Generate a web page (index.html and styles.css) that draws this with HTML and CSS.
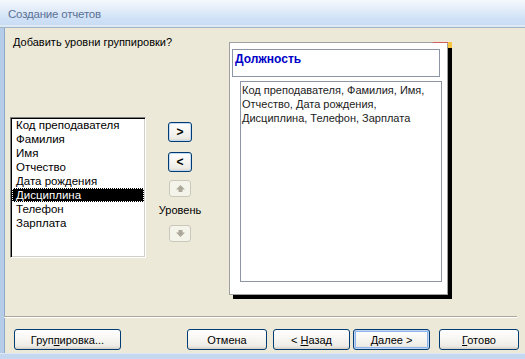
FILE: index.html
```html
<!DOCTYPE html>
<html lang="ru">
<head>
<meta charset="UTF-8" />
<title>Создание отчетов</title>
<link rel="stylesheet" href="styles.css">
</head>
<body>
<div id="wizard">
  <div class="titlebar">Создание отчетов</div>
  <div class="frame">
    <div class="top">
      <div class="left">
        <div class="prompt">Добавить уровни группировки?</div>
        <div class="picker">
          <div class="listbox">
            <div class="item">Код преподавателя</div>
            <div class="item">Фамилия</div>
            <div class="item">Имя</div>
            <div class="item">Отчество</div>
            <div class="item">Дата рождения</div>
            <div class="item selected">Дисциплина</div>
            <div class="item">Телефон</div>
            <div class="item">Зарплата</div>
          </div>
          <div class="controls">
            <button class="btn small">&gt;</button>
            <button class="btn small lt">&lt;</button>
            <button class="btn arrow up" disabled>
              <svg width="9" height="7" viewBox="0 0 9 7"><path d="M4.5 0 L9 4.5 L6.5 4.5 L6.5 7 L2.5 7 L2.5 4.5 L0 4.5 Z" fill="#aca899"/></svg>
            </button>
            <div class="level">Уровень</div>
            <button class="btn arrow" disabled>
              <svg width="9" height="7" viewBox="0 0 9 7"><path d="M4.5 7 L9 2.5 L6.5 2.5 L6.5 0 L2.5 0 L2.5 2.5 L0 2.5 Z" fill="#aca899"/></svg>
            </button>
          </div>
        </div>
      </div>
      <div class="preview">
        <div class="group-head">Должность</div>
        <div class="group-body">Код преподавателя, Фамилия, Имя, Отчество, Дата рождения, Дисциплина, Телефон, Зарплата</div>
      </div>
    </div>
    <div class="separator"></div>
    <div class="actions">
      <button class="btn wide">Груп<u>п</u>ировка...</button>
      <button class="btn cancel">Отмена</button>
      <button class="btn back">&lt; <u>Н</u>азад</button>
      <button class="btn next default"><u>Д</u>алее &gt;</button>
      <button class="btn done"><u>Г</u>отово</button>
    </div>
  </div>
  <div class="bottom-edge"></div>
</div>
</body>
</html>
```

FILE: styles.css
```css
* {
  box-sizing: border-box;
}
body {
  margin: 0;
  width: 525px;
  height: 359px;
  overflow: hidden;
  font-family: "Liberation Sans", Arial, sans-serif;
  font-size: 11px;
  color: #000;
  background: #ece9d8;
}
#wizard {
  display: flex;
  flex-direction: column;
  height: 359px;
}
.titlebar {
  height: 28px;
  padding: 8px 0 0 8px;
  font-size: 11.5px;
  letter-spacing: -0.2px;
  color: #5b7196;
  background: linear-gradient(#f5f8fd 0, #e8f0fa 25%, #cfe1f6 70%, #c6dbf4 100%);
  border-bottom: 1px solid #9fb3c9;
  box-shadow: inset 0 -2px 0 #dfe9f4;
}
.frame {
  flex: 1;
  display: flex;
  flex-direction: column;
  border-left: 4px solid #b6cdea;
  box-shadow: inset 1px 0 0 #8ea9cc;
}
.top {
  display: flex;
  height: 287px;
}
.left {
  width: 225px;
  padding: 8px 0 0 6px;
}
.prompt {
  margin-left: 3px;
  line-height: 13px;
}
.picker {
  display: flex;
  margin-top: 68px;
}
.listbox {
  width: 136px;
  height: 141px;
  background: #fff;
  border-top: 1px solid #808080;
  border-left: 1px solid #808080;
  border-right: 1px solid #fff;
  border-bottom: 1px solid #fff;
  box-shadow: inset 1px 1px 0 #000, inset -1px -1px 0 #d4d0c8;
  padding: 0 1px 1px;
}
.item {
  height: 14px;
  line-height: 14px;
  padding-left: 4px;
  font-size: 11.5px;
  white-space: nowrap;
}
.item.selected {
  background: #000;
  color: #fff;
  outline: 1px dotted #fff;
  outline-offset: -1px;
}
.controls {
  width: 56px;
  margin-left: 6px;
  display: flex;
  flex-direction: column;
  align-items: center;
  padding-top: 5px;
}
.btn {
  font-family: "Liberation Sans", Arial, sans-serif;
  font-size: 11px;
  color: #000;
  border: 1px solid #003c74;
  border-radius: 3px;
  background: linear-gradient(#ffffff 0, #f6f5f1 50%, #ecebe5 85%, #d6d0c5 100%);
  padding: 0;
  height: 21px;
}
.btn.small {
  width: 24px;
  height: 20px;
  font-size: 12px;
  font-weight: bold;
  box-shadow: inset 0 0 0 1px #c4d8f2;
}
.btn.lt {
  margin-top: 10px;
}
.btn.arrow {
  width: 22px;
  height: 17px;
  border-color: #cac8bb;
  background: #f5f4ea;
  display: flex;
  align-items: center;
  justify-content: center;
}
.btn.arrow.up {
  margin-top: 8px;
}
.level {
  margin: 7px 0 8px;
  line-height: 13px;
  white-space: nowrap;
}
.preview {
  position: relative;
  margin-top: 14px;
  width: 219px;
  height: 253px;
  background: #fff;
  border: 1px solid #a0a0a0;
  box-shadow: 4px 4px 0 #000;
  padding: 6px 7px 0 2px;
}
.preview::after {
  content: "";
  position: absolute;
  top: -1px;
  right: -5px;
  width: 4px;
  height: 6px;
  background: #f5c542;
}
.preview::before {
  content: "";
  position: absolute;
  top: -1px;
  right: -1px;
  width: 15px;
  height: 1px;
  background: #d06060;
}
.group-head {
  height: 28px;
  border: 1px solid #8c96a6;
  color: #0000c8;
  font-weight: bold;
  font-size: 12px;
  padding: 2px 0 0 2px;
}
.group-body {
  margin: 4px -2px 0 8px;
  height: 201px;
  border: 1px solid #8c96a6;
  padding: 1px 0 0 1px;
  line-height: 14px;
  color: #222;
}
.separator {
  margin-top: 1px;
  margin-right: 8px;
  height: 2px;
  border-top: 1px solid #aca899;
  border-bottom: 1px solid #fff;
}
.actions {
  display: flex;
  padding-top: 11px;
}
.btn.wide {
  margin-left: 10px;
  width: 107px;
}
.btn.cancel {
  margin-left: 66px;
  width: 80px;
}
.btn.back {
  margin-left: 6px;
  width: 77px;
}
.btn.next {
  margin-left: 3px;
  width: 77px;
}
.btn.default {
  box-shadow: inset 0 0 0 1px #c2d5f2, inset 0 0 0 2px #8fb4ea;
}
.btn.done {
  margin-left: 9px;
  width: 80px;
}
.bottom-edge {
  height: 6px;
  margin-top: auto;
  background: #c5d8f0;
  border-top: 1px solid #dde8f5;
}
```
